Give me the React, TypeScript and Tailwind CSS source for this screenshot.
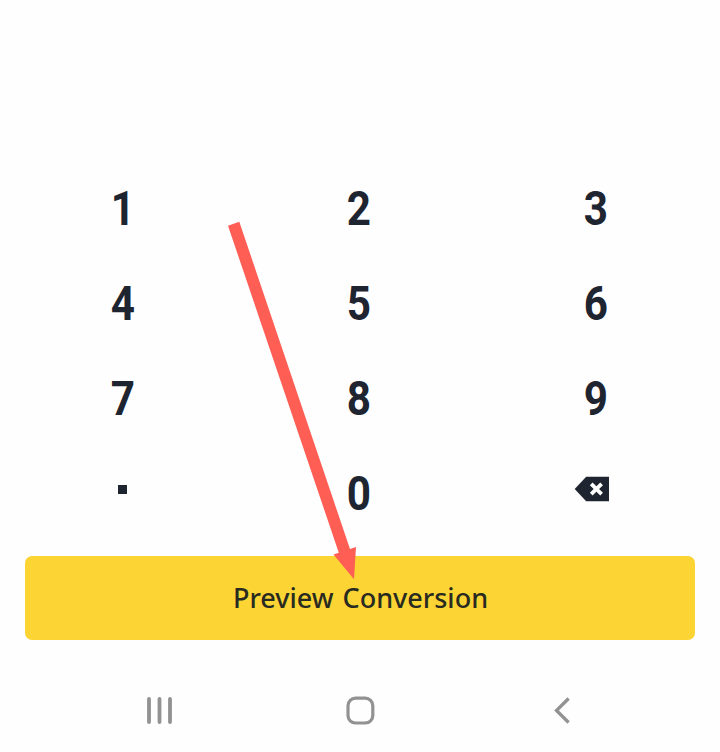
const rows = [
  ['1', '2', '3'],
  ['4', '5', '6'],
  ['7', '8', '9'],
];

function Digit({ value }: { value: string }) {
  return (
    <button className="flex h-[95px] items-center justify-center">
      <span className="block scale-x-[0.88] pr-px leading-[56px]">{value}</span>
    </button>
  );
}

function BackspaceIcon() {
  return (
    <svg width="36" height="26" viewBox="0 0 36 26" aria-label="Delete">
      <path d="M.7 13 12.2 .8H35v24.4H12.2Z" fill="#1e2530" />
      <path d="m17.2 7.8 10.4 10.4m0-10.4L17.2 18.2" stroke="#fff" strokeWidth="3.8" />
    </svg>
  );
}

export default function App() {
  return (
    <main className="relative flex h-[752px] w-[720px] flex-col overflow-hidden bg-[#fefefe] pt-[161px]">
      <div className="ml-[5px] grid w-[709px] grid-cols-3 font-[Roboto,sans-serif] text-[48px] font-bold text-[#1e2530]">
        {rows.flat().map((n) => (
          <Digit key={n} value={n} />
        ))}
        <button className="flex h-[95px] justify-center pt-[39px] pr-px" aria-label="Decimal point">
          <span className="size-[9px] bg-[#1e2530]" />
        </button>
        <Digit value="0" />
        <button className="flex h-[95px] justify-center pt-[30px] pr-[7px]">
          <BackspaceIcon />
        </button>
      </div>
      <button className="mx-[25px] mt-[15px] flex h-[84px] items-center justify-center rounded-[7px] bg-[#fcd535] pl-px font-['Noto_Sans',sans-serif] text-[27px] font-medium [word-spacing:2px] text-[#292b20]">
        Preview Conversion
      </button>
      <nav className="mt-[56px] flex pl-[146px]">
        <svg width="28" height="30" viewBox="0 0 28 30" aria-label="Recent apps">
          <path d="M3 3v23M13.5 3v23M24 3v23" fill="none" stroke="#929292" strokeWidth="3.8" strokeLinecap="round" />
        </svg>
        <svg className="ml-[171px]" width="30" height="30" viewBox="0 0 30 30" aria-label="Home">
          <rect x="3" y="2.2" width="24.8" height="24.8" rx="7.5" fill="none" stroke="#929292" strokeWidth="3.2" />
        </svg>
        <svg className="ml-[178px]" width="18" height="30" viewBox="0 0 18 30" aria-label="Back">
          <path d="M15.6 2.5 3.5 14.5 15.6 26.5" fill="none" stroke="#929292" strokeWidth="3.3" />
        </svg>
      </nav>
      <svg className="pointer-events-none absolute inset-0" width="720" height="752" viewBox="0 0 720 752">
        <path d="M228 225.7 239.3 221.7 350 549 356 547 354 579.3 333.5 554.5 338.8 552.7Z" fill="#ff5e55" />
      </svg>
    </main>
  );
}
